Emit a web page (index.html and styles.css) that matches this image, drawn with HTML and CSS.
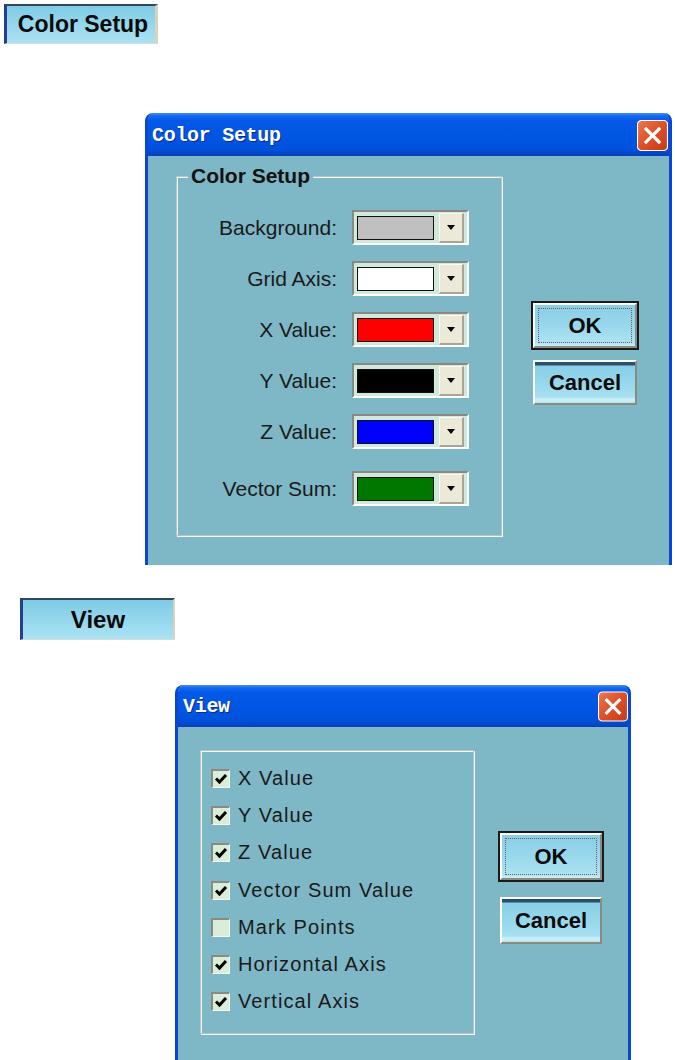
FILE: index.html
```html
<!DOCTYPE html>
<html>
<head>
<meta charset="utf-8">
<link rel="stylesheet" href="styles.css">
</head>
<body>
<div class="page">
  <div class="tab tab-color">Color Setup</div>

  <section class="window win-color">
    <header class="titlebar">
      <span class="title">Color Setup</span>
      <span class="close"><svg viewBox="0 0 31 31" width="31" height="31"><defs><linearGradient id="cg1" x1="0" y1="0" x2="1" y2="1"><stop offset="0" stop-color="#ec7a55"/><stop offset="0.5" stop-color="#dd4f26"/><stop offset="1" stop-color="#c23c18"/></linearGradient></defs><rect x="0.5" y="0.5" width="30" height="30" rx="4" fill="url(#cg1)" stroke="#fff" stroke-width="1.2"/><path d="M9 9 L22 22 M22 9 L9 22" stroke="#fff" stroke-width="3.2" stroke-linecap="square"/></svg></span>
    </header>
    <div class="client client-color">
      <fieldset class="group group-color">
        <span class="legend">Color Setup</span>
        <div class="row"><span class="lbl">Background:</span><span class="combo"><span class="swatch sw-bg"></span><span class="drop"><i class="arrow"></i></span></span></div>
        <div class="row"><span class="lbl">Grid Axis:</span><span class="combo"><span class="swatch sw-grid"></span><span class="drop"><i class="arrow"></i></span></span></div>
        <div class="row"><span class="lbl">X Value:</span><span class="combo"><span class="swatch sw-x"></span><span class="drop"><i class="arrow"></i></span></span></div>
        <div class="row"><span class="lbl">Y Value:</span><span class="combo"><span class="swatch sw-y"></span><span class="drop"><i class="arrow"></i></span></span></div>
        <div class="row"><span class="lbl">Z Value:</span><span class="combo"><span class="swatch sw-z"></span><span class="drop"><i class="arrow"></i></span></span></div>
        <div class="row row-last"><span class="lbl">Vector Sum:</span><span class="combo"><span class="swatch sw-v"></span><span class="drop"><i class="arrow"></i></span></span></div>
      </fieldset>
      <div class="actions actions-color">
        <div class="btn btn-default"><span class="focus">OK</span></div>
        <div class="btn">Cancel</div>
      </div>
    </div>
  </section>

  <div class="tab tab-view">View</div>

  <section class="window win-view">
    <header class="titlebar titlebar-view">
      <span class="title">View</span>
      <span class="close"><svg viewBox="0 0 31 31" width="30" height="31"><defs><linearGradient id="cg2" x1="0" y1="0" x2="1" y2="1"><stop offset="0" stop-color="#ec7a55"/><stop offset="0.5" stop-color="#dd4f26"/><stop offset="1" stop-color="#c23c18"/></linearGradient></defs><rect x="0.5" y="0.5" width="30" height="30" rx="4" fill="url(#cg2)" stroke="#fff" stroke-width="1.2"/><path d="M9 9 L22 22 M22 9 L9 22" stroke="#fff" stroke-width="3.2" stroke-linecap="square"/></svg></span>
    </header>
    <div class="client client-view">
      <div class="group group-view">
        <div class="check"><span class="box"><svg viewBox="0 0 16 16" width="16" height="16"><path d="M3 7.5 L6.5 11 L13 4" fill="none" stroke="#000" stroke-width="3"/></svg></span>X Value</div>
        <div class="check"><span class="box"><svg viewBox="0 0 16 16" width="16" height="16"><path d="M3 7.5 L6.5 11 L13 4" fill="none" stroke="#000" stroke-width="3"/></svg></span>Y Value</div>
        <div class="check"><span class="box"><svg viewBox="0 0 16 16" width="16" height="16"><path d="M3 7.5 L6.5 11 L13 4" fill="none" stroke="#000" stroke-width="3"/></svg></span>Z Value</div>
        <div class="check"><span class="box"><svg viewBox="0 0 16 16" width="16" height="16"><path d="M3 7.5 L6.5 11 L13 4" fill="none" stroke="#000" stroke-width="3"/></svg></span>Vector Sum Value</div>
        <div class="check"><span class="box"></span>Mark Points</div>
        <div class="check"><span class="box"><svg viewBox="0 0 16 16" width="16" height="16"><path d="M3 7.5 L6.5 11 L13 4" fill="none" stroke="#000" stroke-width="3"/></svg></span>Horizontal Axis</div>
        <div class="check"><span class="box"><svg viewBox="0 0 16 16" width="16" height="16"><path d="M3 7.5 L6.5 11 L13 4" fill="none" stroke="#000" stroke-width="3"/></svg></span>Vertical Axis</div>
      </div>
      <div class="actions actions-view">
        <div class="btn btn-default btn-view"><span class="focus">OK</span></div>
        <div class="btn btn-view">Cancel</div>
      </div>
    </div>
  </section>
</div>
</body>
</html>
```

FILE: styles.css
```css
* { box-sizing: border-box; }

body {
  margin: 0;
  background: #ffffff;
  font-family: "Liberation Sans", Arial, sans-serif;
  color: #111;
}

.page {
  display: flex;
  flex-direction: column;
  align-items: flex-start;
  height: 1060px;
  overflow: hidden;
}

/* ---------- standalone tab buttons ---------- */
.tab {
  display: flex;
  align-items: center;
  justify-content: center;
  font-weight: bold;
  color: #0a0a0a;
  background: linear-gradient(#7fcbe4, #93d6ec 45%, #a9e2f2);
}

.tab-color {
  margin: 4px 0 0 4px;
  width: 154px;
  height: 40px;
  font-size: 23px;
  border-left: 3px solid #23408c;
  border-top: 2px solid #34465e;
  border-right: 3px solid #dcd2bb;
  border-bottom: 1px solid #d4dede;
  padding-left: 4px;
}

.tab-view {
  margin: 33px 0 0 20px;
  width: 155px;
  height: 42px;
  font-size: 24px;
  border-left: 3px solid #23408c;
  border-top: 2px solid #34465e;
  border-right: 2px solid #dcd2bb;
  border-bottom: 1px solid #d4dede;
}

/* ---------- windows ---------- */
.window {
  display: flex;
  flex-direction: column;
  background: #7eb7c6;
  border-left: 3px solid #0846d6;
  border-right: 3px solid #0846d6;
  border-radius: 8px 8px 0 0;
  overflow: hidden;
}

.win-color {
  margin: 69px 0 0 145px;
  width: 527px;
  height: 452px;
}

.win-view {
  margin: 45px 0 0 175px;
  width: 456px;
  height: 375px;
}

.titlebar {
  flex: none;
  height: 43px;
  display: flex;
  align-items: center;
  justify-content: space-between;
  padding: 2px 1px 0 4px;
  background: linear-gradient(#3d8ef8 0, #1467f0 7%, #0358e8 18%, #0055e2 60%, #0050da 85%, #0a3fb8 100%);
}

.titlebar-view {
  height: 42px;
  padding: 1px 0 0 5px;
}

.title {
  font-family: "Liberation Mono", "Courier New", monospace;
  font-weight: bold;
  font-size: 20px;
  color: #ffffff;
  text-shadow: 1px 1px 0 #0a2a8a;
  letter-spacing: -0.3px;
}

.close {
  display: flex;
}

/* ---------- client area ---------- */
.client {
  flex: 1;
  display: flex;
  align-items: flex-start;
}

.client-color {
  padding: 8px 0 0 28px;
}

.client-view {
  padding: 23px 0 0 22px;
}

.group {
  margin: 0;
  padding: 0;
  border: 1px solid #b9c3c3;
  box-shadow: inset 1px 1px 0 #f4f6f4, 1px 1px 0 #f4f6f4;
  min-width: 0;
}

.group-color {
  margin-top: 12px;
  width: 326px;
  height: 360px;
  display: flex;
  flex-direction: column;
}

.legend {
  display: block;
  width: fit-content;
  margin: -13px 0 0 11px;
  padding: 0 3px;
  height: 24px;
  line-height: 24px;
  background: #7eb7c6;
  font-size: 21px;
  font-weight: bold;
  color: #111;
}

.row {
  display: flex;
  align-items: center;
  height: 35px;
  margin-top: 16px;
}

.group-color .legend + .row {
  margin-top: 22px;
}

.row-last {
  margin-top: 22px;
}

.lbl {
  width: 160px;
  text-align: right;
  font-size: 21px;
  color: #1a1a1a;
}

.combo {
  margin-left: 15px;
  width: 117px;
  height: 35px;
  display: flex;
  align-items: center;
  padding: 0 3px 0 3px;
  background: #cfe9dc;
  border-top: 2px solid #8a8880;
  border-left: 2px solid #8a8880;
  border-bottom: 2px solid #ffffff;
  border-right: 2px solid #ffffff;
}

.swatch {
  width: 77px;
  height: 24px;
  border: 1.5px solid #111;
}

.sw-bg { background: #c0c0c0; }
.sw-grid { background: #ffffff; }
.sw-x { background: #ff0000; }
.sw-y { background: #000000; }
.sw-z { background: #0000ff; }
.sw-v { background: #007800; }

.drop {
  margin-left: auto;
  width: 25px;
  height: 30px;
  display: flex;
  align-items: center;
  justify-content: center;
  background: #ece9d8;
  border-top: 1px solid #fbfaf5;
  border-left: 1px solid #fbfaf5;
  border-right: 2px solid #a8a496;
  border-bottom: 2px solid #a8a496;
}

.arrow {
  width: 0;
  height: 0;
  border-left: 4px solid transparent;
  border-right: 4px solid transparent;
  border-top: 5px solid #000;
}

/* ---------- buttons ---------- */
.actions {
  display: flex;
  flex-direction: column;
}

.actions-color {
  margin: 139px 0 0 31px;
  gap: 12px;
}

.actions-view {
  margin: 83px 0 0 26px;
  gap: 17px;
}

.btn {
  width: 104px;
  height: 45px;
  display: flex;
  align-items: center;
  justify-content: center;
  font-size: 22px;
  font-weight: bold;
  color: #0a0a0a;
  border-top: 2px solid #ffffff;
  border-left: 2px solid #ffffff;
  border-right: 2px solid #8a8a7e;
  border-bottom: 2px solid #8a8a7e;
  background: linear-gradient(#2b4d6e 0, #2b4d6e 3px, #88cfe6 4px, #96d7ec 50%, #a7e0f1 85%, #cdf1f8 92%, #b7e3ee 100%);
}

.btn-default {
  outline: 2px solid #1a1a1a;
  outline-offset: 0;
  border-top-color: #ffffff;
  background: linear-gradient(#8acfe6, #98d8ec 50%, #ace2f2 90%, #c8eef6);
}

.btn-view {
  width: 102px;
  height: 47px;
}

.focus {
  display: flex;
  align-items: center;
  justify-content: center;
  width: calc(100% - 6px);
  height: calc(100% - 6px);
  border: 1px dotted #6a5a6a;
}

/* ---------- view dialog ---------- */
.group-view {
  width: 274px;
  height: 284px;
  padding: 9px 0 0 10px;
  display: flex;
  flex-direction: column;
}

.check {
  display: flex;
  align-items: center;
  height: 37.2px;
  font-size: 20px;
  color: #1a1a1a;
  letter-spacing: 1.1px;
}

.box {
  flex: none;
  width: 19px;
  height: 19px;
  margin-right: 8px;
  display: flex;
  align-items: center;
  justify-content: center;
  background: #d9eed9;
  border-top: 2px solid #8a8a80;
  border-left: 2px solid #8a8a80;
  border-bottom: 1px solid #f4f8f4;
  border-right: 1px solid #f4f8f4;
}
```
